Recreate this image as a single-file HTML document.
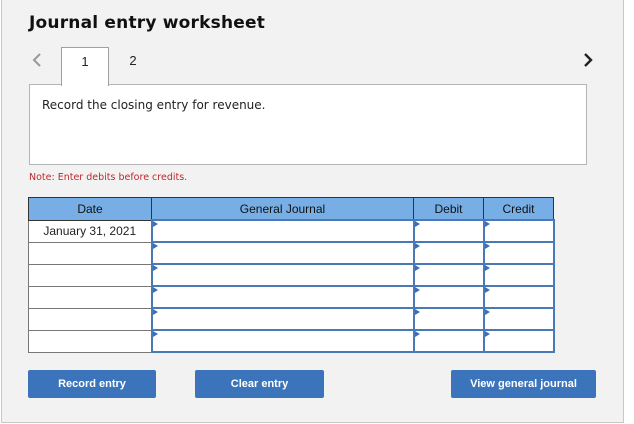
<!DOCTYPE html>
<html><head><style>
body{margin:0;width:634px;height:424px;background:#fff;position:relative;font-family:"DejaVu Sans",Verdana,sans-serif;overflow:hidden}
.panel{position:absolute;left:1px;top:-1px;width:621px;height:422px;background:#f2f2f2;border:1px solid #c8c8c8}
.abs{position:absolute}
h1{position:absolute;left:29px;top:13px;margin:0;font-size:17px;font-weight:bold;color:#111;letter-spacing:0.2px}
.tab{position:absolute;top:47px;width:46px;height:38px;font-family:"Liberation Sans",Arial,sans-serif;font-size:13px;text-align:center;line-height:28px;color:#222}
.box{position:absolute;left:29px;top:84px;width:556px;height:79px;background:#fff;border:1px solid #b5b5b5}
.box p{margin:0;position:absolute;left:12px;top:13px;font-size:12px;color:#222}
table{position:absolute;left:28px;top:197px;border-collapse:collapse;font-family:"Liberation Sans",Arial,sans-serif;font-size:12px}
th{background:#77aee5;border:1px solid #333;height:21px;font-weight:normal;color:#111;padding:0}
td{height:20px;padding:0;border:1px solid #777;background:#fff}
td.i{border:2px solid #4a7ab5;position:relative}
td.i:before{content:"";position:absolute;left:0;top:0;border-left:5px solid #3a6fc0;border-top:3px solid transparent;border-bottom:3px solid transparent}
.btn{position:absolute;top:370px;height:28px;background:#3b74ba;color:#fff;font-family:"Liberation Sans",Arial,sans-serif;font-weight:bold;font-size:11px;text-align:center;line-height:28px;border-radius:2px}
</style></head><body>
<div class="panel"></div>
<h1>Journal entry worksheet</h1>
<svg class="abs" style="left:31px;top:52px" width="12" height="16"><path d="M9 2 L3 8 L9 14" fill="none" stroke="#999" stroke-width="2"/></svg>
<div class="tab" style="left:61px;background:#fff;border:1px solid #a0a0a0;border-bottom:none;z-index:2">1</div>
<div class="tab" style="left:110px">2</div>
<svg class="abs" style="left:582px;top:52px" width="12" height="16"><path d="M3 2 L9 8 L3 14" fill="none" stroke="#222" stroke-width="2.4"/></svg>
<div class="box"><p>Record the closing entry for revenue.</p></div>
<div class="abs" style="left:29px;top:172px;font-size:9.5px;color:#c0282c">Note: Enter debits before credits.</div>
<table>
<tr><th style="width:122px">Date</th><th style="width:261px">General Journal</th><th style="width:69px">Debit</th><th style="width:69px">Credit</th></tr>
<tr><td style="text-align:center;color:#222">January 31, 2021</td><td class="i"></td><td class="i"></td><td class="i"></td></tr>
<tr><td></td><td class="i"></td><td class="i"></td><td class="i"></td></tr>
<tr><td></td><td class="i"></td><td class="i"></td><td class="i"></td></tr>
<tr><td></td><td class="i"></td><td class="i"></td><td class="i"></td></tr>
<tr><td></td><td class="i"></td><td class="i"></td><td class="i"></td></tr>
<tr><td></td><td class="i"></td><td class="i"></td><td class="i"></td></tr>
</table>
<div class="btn" style="left:28px;width:128px">Record entry</div>
<div class="btn" style="left:195px;width:129px">Clear entry</div>
<div class="btn" style="left:451px;width:145px">View general journal</div>
</body></html>
